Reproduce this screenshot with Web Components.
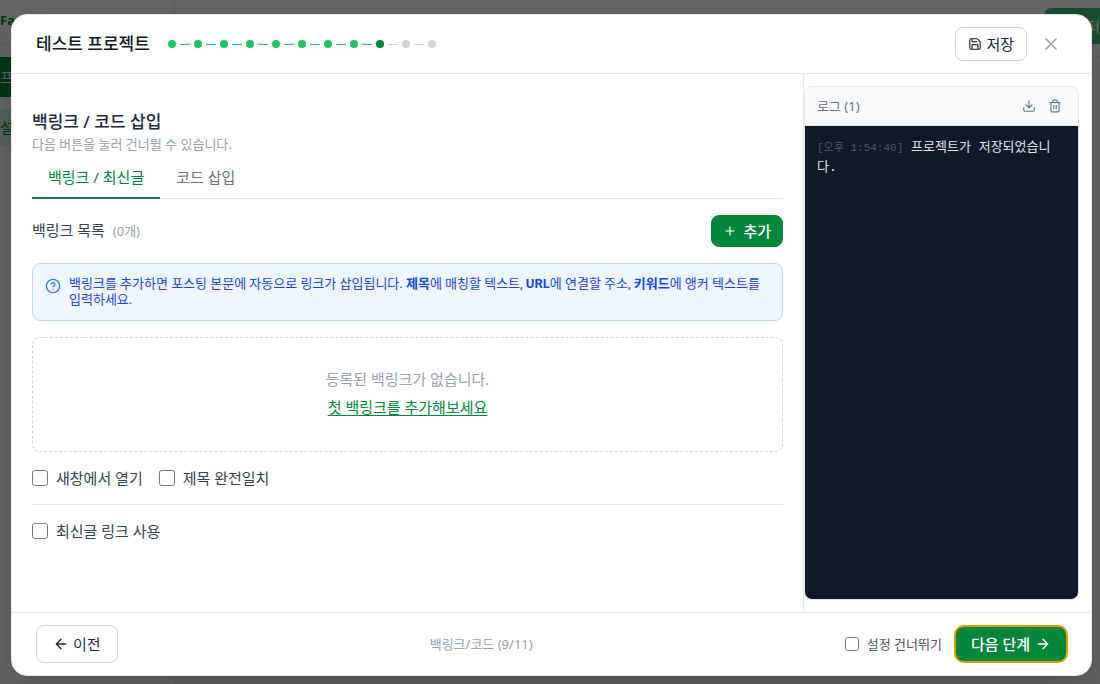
<!DOCTYPE html>
<html lang="ko">
<head>
<meta charset="utf-8">
<meta name="viewport" content="width=device-width, initial-scale=1">
<title>테스트 프로젝트</title>
<style>
html, body { height: 100%; margin: 0; }
body {
  font-family: "Noto Sans", "Noto Sans CJK KR", sans-serif;
  font-size: 15px; line-height: 20px; color: #1e2939; background: #f9fafb; overflow: hidden;
}
</style>
</head>
<body>
<app-page></app-page>
<script>
const icons = {
  save: '<path d="M15.2 3a2 2 0 0 1 1.4.6l3.8 3.8a2 2 0 0 1 .6 1.4V19a2 2 0 0 1-2 2H5a2 2 0 0 1-2-2V5a2 2 0 0 1 2-2z"/><path d="M17 21v-7a1 1 0 0 0-1-1H8a1 1 0 0 0-1 1v7M7 3v4a1 1 0 0 0 1 1h7"/>',
  close: '<path d="M18 6 6 18M6 6l12 12"/>',
  download: '<path d="M21 15v4a2 2 0 0 1-2 2H5a2 2 0 0 1-2-2v-4M7 10l5 5 5-5M12 15V3"/>',
  trash: '<path d="M3 6h18M19 6v14a2 2 0 0 1-2 2H7a2 2 0 0 1-2-2V6M8 6V4a2 2 0 0 1 2-2h4a2 2 0 0 1 2 2v2M10 11v6M14 11v6"/>',
  help: '<circle cx="12" cy="12" r="10"/><path d="M9.1 9a3 3 0 0 1 5.8 1c0 2-3 3-3 3M12 17h.01"/>',
  plus: '<path d="M5 12h14M12 5v14"/>',
  left: '<path d="m12 19-7-7 7-7M19 12H5"/>',
  right: '<path d="M5 12h14M12 5l7 7-7 7"/>'
};

function define(name, html, setup) {
  const template = document.createElement('template');
  template.innerHTML = html;
  customElements.define(name, class extends HTMLElement {
    connectedCallback() {
      if (this.shadowRoot) return;
      this.attachShadow({ mode: 'open' }).append(template.content.cloneNode(true));
      if (setup) setup(this, this.shadowRoot);
    }
  });
}

define('ui-icon', `
<style>
:host { display: block; flex: none; width: var(--size, 16px); height: var(--size, 16px); }
svg { display: block; width: 100%; height: 100%; fill: none; stroke: currentColor; stroke-width: 2; stroke-linecap: round; stroke-linejoin: round; }
</style><svg viewBox="0 0 24 24" aria-hidden="true"></svg>`,
(el, root) => {
  root.querySelector('svg').innerHTML = icons[el.getAttribute('name')];
});

define('ui-button', `
<style>
:host { display: block; }
button { display: flex; align-items: center; gap: 4px; margin: 0; font: inherit; color: #1e2939; background: #fff;
  border: 1px solid #d1d5dc; border-radius: 8px; padding: 6px 12px; cursor: pointer; white-space: nowrap; }
:host([kind="nav"]) button { padding: 8px 16px; }
:host([kind="add"]) { --size: 14px; }
:host([kind="add"]) button { background: #00873c; border-color: #00873c; color: #fff; font-weight: 500; gap: 6px; padding: 5px 11px; }
:host([kind="next"]) button { background: #00873c; border: 2px solid #e69a00; border-radius: 10px; color: #fff; font-weight: 500; gap: 5px; padding: 7px 15px; }
:host([kind="plain"]) button { background: none; border: 0; padding: var(--pad, 4px); color: inherit; }
</style><button type="button"><slot></slot></button>`,
(el, root) => {
  const label = el.getAttribute('label');
  if (label) root.querySelector('button').setAttribute('aria-label', label);
});

define('ui-check', `
<style>
:host { display: block; color: #364153; }
label { display: flex; align-items: center; gap: 8px; cursor: pointer; }
input { width: 16px; height: 16px; margin: 0; flex: none; }
:host([small]) { color: #4a5565; font-size: 13px; }
:host([small]) input { width: 14px; height: 14px; }
</style><label><input type="checkbox"><span><slot></slot></span></label>`);

define('step-dots', `
<style>
:host { display: flex; align-items: center; gap: 4px; }
i { width: 8px; height: 8px; border-radius: 50%; background: #d1d5dc; }
b { width: 10px; height: 1px; background: #d1d5dc; }
.done { background: #21c55d; }
.now { background: #00873c; }
</style>`,
(el, root) => {
  const total = +el.getAttribute('total'), current = +el.getAttribute('current');
  for (let n = 1; n <= total; n++) {
    if (n > 1) {
      const line = document.createElement('b');
      if (n <= current) line.className = 'done';
      root.append(line);
    }
    const dot = document.createElement('i');
    dot.className = n < current ? 'done' : n === current ? 'now' : '';
    root.append(dot);
  }
});

define('page-backdrop', `
<style>
:host { display: flex; height: 100%; }
aside { width: 175px; box-sizing: border-box; border-right: 1px solid #e5e7eb; background: #fff; }
.brand { height: 45px; box-sizing: border-box; padding-top: 10px; border-bottom: 1px solid #e5e7eb; color: #00873c; font-weight: 700; font-size: 13px; }
nav { display: flex; flex-direction: column; gap: 12px; padding-top: 12px; }
a { color: #00873c; text-decoration: none; line-height: 36px; background: #dcf5e6; white-space: nowrap; }
a.on { color: #fff; background: #00873c; line-height: 40px; }
main { flex: 1; }
header { display: flex; justify-content: flex-end; height: 57px; box-sizing: border-box; padding-top: 8px; border-bottom: 1px solid #e5e7eb; background: #fff; }
button { width: 56px; height: 36px; border: 0; padding: 0; font: inherit; color: #fff; background: #4fbd80; border-radius: 8px 0 0 8px; text-align: right; }
</style>
<aside><div class="brand">Fac</div><nav><a class="on" href="#project">프</a><a href="#settings">설</a></nav></aside>
<main><header><button type="button">저</button></header></main>`);

define('backlink-panel', `
<style>
:host { display: block; padding: 36px 20px 20px; }
h2, h3, p { margin: 0; font-weight: 400; }
h2 { font-size: 17px; line-height: 24px; font-weight: 500; }
.sub { font-size: 13px; line-height: 20px; color: #99a1af; }
.tabs { display: flex; border-bottom: 1px solid #e5e7eb; margin-top: 3px; }
.tabs button { font: inherit; color: #6a7282; background: none; border: 0; border-bottom: 2px solid transparent; margin: 0 0 -1px; padding: 10px 16px; line-height: 20px; }
.tabs .on { color: #00873c; border-color: #00873c; }
.head { display: flex; justify-content: space-between; align-items: center; padding: 16px 0; }
h3 { font-size: 15px; color: #364153; padding-bottom: 2px; }
small { font-size: 13px; color: #99a1af; margin-left: 4px; }
.info { display: flex; gap: 8px; padding: 12px; border: 1px solid #bedbff; border-radius: 8px; background: #eff6ff; color: #1447e6; font: 13px/16px Roboto, "Noto Sans CJK KR", sans-serif; }
.info ui-icon { color: #2b7fff; margin-top: 2px; }
.empty { margin-top: 16px; border: 1px dashed #d1d5dc; border-radius: 8px; padding: 31px 16px 34px; text-align: center; color: #99a1af; }
.empty p { margin-bottom: 8px; }
.empty a { color: #00873c; text-decoration: underline; text-underline-offset: 2px; }
.row { display: flex; gap: 16px; padding: 16px 0; border-bottom: 1px solid #e5e7eb; }
.row:last-child { border: 0; }
</style>
<h2>백링크 / 코드 삽입</h2>
<p class="sub">다음 버튼을 눌러 건너뛸 수 있습니다.</p>
<div class="tabs" role="tablist"><button type="button" role="tab" aria-selected="true" class="on">백링크 / 최신글</button><button type="button" role="tab" aria-selected="false">코드 삽입</button></div>
<div class="head"><h3>백링크 목록 <small>(0개)</small></h3><ui-button kind="add"><ui-icon name="plus"></ui-icon>추가</ui-button></div>
<div class="info"><ui-icon name="help"></ui-icon><p>백링크를 추가하면 포스팅 본문에 자동으로 링크가 삽입됩니다. <b>제목</b>에 매칭할 텍스트, <b>URL</b>에 연결할 주소, <b>키워드</b>에 앵커 텍스트를 입력하세요.</p></div>
<div class="empty"><p>등록된 백링크가 없습니다.</p><a href="#add">첫 백링크를 추가해보세요</a></div>
<div class="row"><ui-check>새창에서 열기</ui-check><ui-check>제목 완전일치</ui-check></div>
<div class="row"><ui-check>최신글 링크 사용</ui-check></div>`);

define('log-panel', `
<style>
:host { display: flex; flex-direction: column; border: 1px solid #e5e7eb; border-radius: 8px; overflow: hidden; }
header { display: flex; align-items: center; padding: 8px 12px; height: 22px; border-bottom: 1px solid #e5e7eb; background: #f9fafb; color: #6a7282; font-size: 13px; }
header span { flex: 1; }
header ui-icon { --size: 14px; }
header ui-button { margin-left: 4px; }
p { flex: 1; margin: 0; padding: 12px; background: #111827; font: 13px/20px "Liberation Mono", "Noto Sans CJK KR", monospace; color: #e5e7eb; word-break: break-all; }
time { color: #4a5565; font-size: 11px; }
</style>
<header><span>로그 (1)</span><ui-button kind="plain" label="로그 다운로드"><ui-icon name="download"></ui-icon></ui-button><ui-button kind="plain" label="로그 지우기"><ui-icon name="trash"></ui-icon></ui-button></header>
<p><time>[오후 1:54:40]</time> 프로젝트가 저장되었습니다.</p>`);

define('project-dialog', `
<style>
:host { display: flex; flex-direction: column; box-sizing: border-box; border: 1px solid #e5e7eb; border-radius: 16px; background: #fff; overflow: hidden; box-shadow: 0 16px 40px rgba(0,0,0,.2); }
header { display: flex; align-items: center; padding: 12px 24px; border-bottom: 1px solid #e5e7eb; height: 34px; }
h1 { margin: 0 18px 0 0; font-size: 17px; line-height: 24px; font-weight: 500; color: #101828; }
.tools { margin-left: auto; display: flex; align-items: center; gap: 8px; }
.tools .x { color: #99a1af; --size: 20px; --pad: 6px; }
.save { --size: 14px; }
.body { flex: 1; min-height: 0; display: grid; grid-template-columns: minmax(0, 1fr) 288px; }
.side { display: grid; border-left: 1px solid #e5e7eb; padding: 12px 12px 12px 0; }
footer { display: flex; justify-content: space-between; align-items: center; padding: 12px 23px 12px 24px; border-top: 1px solid #e5e7eb; }
.step { font-size: 13px; color: #99a1af; }
.end { display: flex; align-items: center; gap: 12px; }
</style>
<header><h1>테스트 프로젝트</h1><step-dots total="11" current="9"></step-dots>
<div class="tools"><ui-button class="save"><ui-icon name="save"></ui-icon>저장</ui-button><ui-button kind="plain" class="x" label="닫기"><ui-icon name="close"></ui-icon></ui-button></div></header>
<div class="body"><backlink-panel></backlink-panel><div class="side"><log-panel></log-panel></div></div>
<footer><ui-button kind="nav"><ui-icon name="left"></ui-icon>이전</ui-button><span class="step">백링크/코드 (9/11)</span><div class="end"><ui-check small>설정 건너뛰기</ui-check><ui-button kind="next">다음 단계<ui-icon name="right"></ui-icon></ui-button></div></footer>`);

define('app-page', `
<style>
:host { display: grid; height: 100%; }
page-backdrop, .overlay { grid-area: 1 / 1; min-height: 0; }
.overlay { display: grid; padding: 14px 8px 8px 11px; background: rgba(0,0,0,.6); z-index: 1; }
</style>
<page-backdrop></page-backdrop><div class="overlay"><project-dialog role="dialog" aria-modal="true"></project-dialog></div>`);
</script>
</body>
</html>
